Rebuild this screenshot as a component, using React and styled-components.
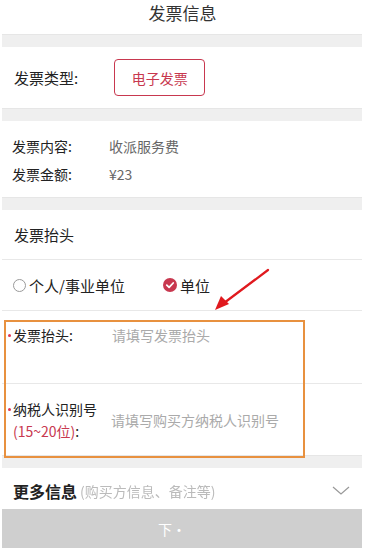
import React from 'react'
import styled, { createGlobalStyle } from 'styled-components'

const GlobalStyle = createGlobalStyle`
  html, body {
    margin: 0;
    padding: 0;
    background: #fff;
    font-family: "Noto Sans CJK SC", "Noto Sans", sans-serif;
    color: #222;
  }
`

const Page = styled.div`
  width: 365px;
  height: 549px;
  overflow: hidden;
  position: relative;
  background: #fff;
`

const Title = styled.h1`
  margin: 0;
  height: 34px;
  display: flex;
  align-items: center;
  justify-content: center;
  font-size: 17px;
  font-weight: 400;
  color: #333;
  padding-bottom: 9px;
  box-sizing: border-box;
`

const Panel = styled.div`
  margin: 0 3px 0 2px;
`

const Band = styled.div`
  height: ${p => p.h || 13}px;
  background: #efefef;
  border-top: 1px solid #e6e6e6;
  box-sizing: border-box;
`

const Row = styled.div`
  display: flex;
  align-items: ${p => (p.top ? 'flex-start' : 'center')};
  height: ${p => p.h}px;
  padding-left: ${p => p.pl || 12}px;
  padding-top: ${p => p.pt || 0}px;
  box-sizing: border-box;
  border-bottom: ${p => (p.line ? '1px solid #e8e8e8' : 'none')};
  font-size: ${p => p.fs || 14}px;
`

const Label = styled.span`
  width: ${p => p.w || 'auto'};
  flex-shrink: 0;
  color: #222;
  position: relative;
`

const TypeButton = styled.div`
  margin-left: 36px;
  width: 91px;
  height: 37px;
  border: 1.5px solid #c8384f;
  border-radius: 4px;
  box-sizing: border-box;
  display: flex;
  align-items: center;
  justify-content: center;
  color: #c8384f;
  font-size: 14px;
`

const InfoBlock = styled.div`
  padding: 11px 0 9px 10px;
  display: flex;
  flex-direction: column;
`

const InfoLine = styled.div`
  display: flex;
  height: 28px;
  align-items: center;
  font-size: 14px;
`

const Value = styled.span`
  color: #666;
`

const Radio = styled.span`
  display: inline-flex;
  align-items: center;
  gap: 3px;
  margin-right: ${p => p.mr || 0}px;
  font-size: 15px;
  color: #222;
`

const Circle = styled.span`
  width: 13px;
  height: 13px;
  border-radius: 50%;
  border: 1px solid #9a9a9a;
  box-sizing: border-box;
`

const FormArea = styled.div`
  position: relative;
`

const Highlight = styled.div`
  position: absolute;
  left: 2px;
  top: 9px;
  width: 301px;
  height: 138px;
  border: 2px solid #e8913f;
  box-sizing: border-box;
  pointer-events: none;
`

const Required = styled.span`
  position: absolute;
  left: -5px;
  top: ${p => p.top || 10}px;
  width: 3px;
  height: 3px;
  border-radius: 50%;
  background: #e0344f;
`

const Placeholder = styled.span`
  color: #aaa;
  font-size: 14px;
`

const TwoLine = styled.div`
  position: relative;
  width: 98px;
  flex-shrink: 0;
  line-height: 22px;
  font-size: 14px;
  span.red {
    color: #c8384f;
  }
`

const MoreRow = styled.div`
  display: flex;
  align-items: center;
  height: 41px;
  padding: 4px 12px 0 11px;
  box-sizing: border-box;
`

const MoreTitle = styled.span`
  font-size: 16px;
  font-weight: 700;
  color: #222;
`

const MoreHint = styled.span`
  font-size: 14px;
  margin-left: 3px;
  color: #bbb;
  flex: 1;
  white-space: nowrap;
  overflow: hidden;
  -webkit-mask-image: linear-gradient(90deg, #000 65%, transparent 90%);
`

const BottomBar = styled.div`
  height: 39px;
  background: #cfcfcf;
  display: flex;
  align-items: center;
  justify-content: center;
  padding-right: 20px;
  color: #fff;
  font-size: 14px;
`

const Arrow = styled.svg`
  position: absolute;
  left: 210px;
  top: 266px;
  pointer-events: none;
`

export default function App() {
  return (
    <Page>
      <GlobalStyle />
      <Title>发票信息</Title>
      <Panel>
        <Band />
        <Row h={61} pl={12} fs={15}>
          <Label>发票类型:</Label>
          <TypeButton>电子发票</TypeButton>
        </Row>
        <Band />
        <InfoBlock>
          <InfoLine>
            <Label w="97px">发票内容:</Label>
            <Value>收派服务费</Value>
          </InfoLine>
          <InfoLine>
            <Label w="97px">发票金额:</Label>
            <Value>¥23</Value>
          </InfoLine>
        </InfoBlock>
        <Band />
        <Row h={50} fs={15} line>
          <Label>发票抬头</Label>
        </Row>
        <Row h={51} pl={11} line>
          <Radio mr={38}>
            <Circle />
            个人/事业单位
          </Radio>
          <Radio>
            <svg width="14" height="14" viewBox="0 0 14 14">
              <circle cx="7" cy="7" r="7" fill="#c8384f" />
              <path d="M3.8 7.2 L6.1 9.3 L10.2 5" stroke="#fff" strokeWidth="1.8" fill="none" strokeLinecap="round" strokeLinejoin="round" />
            </svg>
            单位
          </Radio>
        </Row>
        <FormArea>
          <Row h={73} pl={11} pt={14} top line>
            <Label w="99px">
              <Required top={9} />
              发票抬头:
            </Label>
            <Placeholder>请填写发票抬头</Placeholder>
          </Row>
          <Row h={71} pl={11}>
            <TwoLine>
              <Required top={10} />
              纳税人识别号
              <br />
              <span className="red">(15~20位)</span>:
            </TwoLine>
            <Placeholder>请填写购买方纳税人识别号</Placeholder>
          </Row>
          <Highlight />
        </FormArea>
        <Band />
        <MoreRow>
          <MoreTitle>更多信息</MoreTitle>
          <MoreHint>(购买方信息、备注等)</MoreHint>
          <svg width="18" height="10" viewBox="0 0 18 10">
            <path d="M1 1 L9 8 L17 1" stroke="#999" strokeWidth="1.2" fill="none" />
          </svg>
        </MoreRow>
        <BottomBar>下·</BottomBar>
      </Panel>
      <Arrow width="62" height="48" viewBox="0 0 62 48">
        <path d="M58 4 L14 37" stroke="#e0191e" strokeWidth="2.2" strokeLinecap="round" />
        <path d="M5 44 L11 30 L19 38 Z" fill="#e0191e" />
      </Arrow>
    </Page>
  )
}
